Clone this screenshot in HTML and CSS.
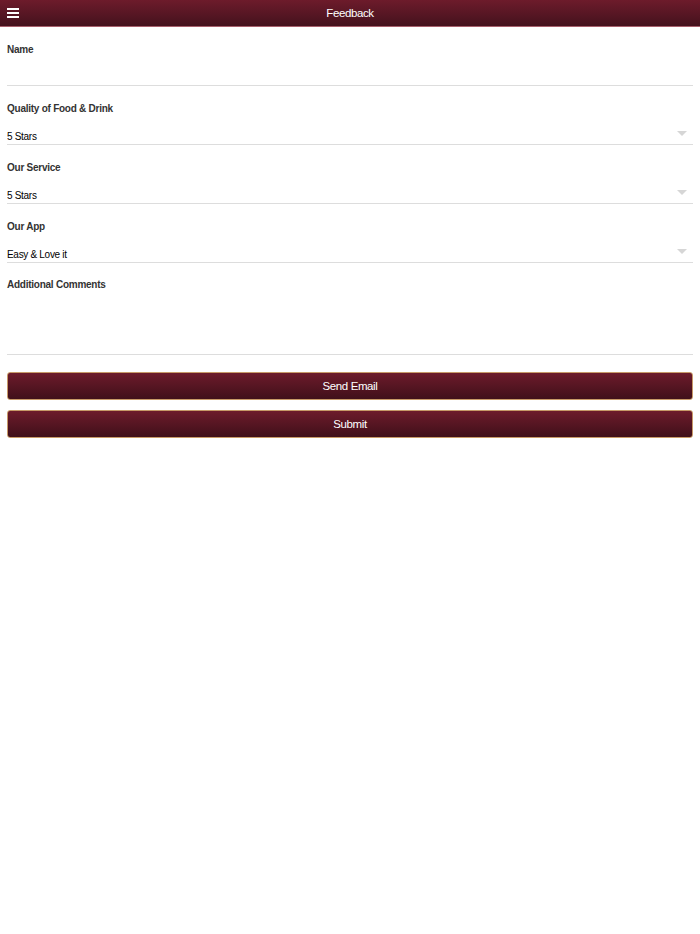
FILE: index.html
```html
<!DOCTYPE html>
<html lang="en">
<head>
<meta charset="UTF-8">
<title>Feedback</title>
<link rel="stylesheet" href="styles.css">
</head>
<body>

<div class="header">
    <div class="menu-icon">
        <span></span>
        <span></span>
        <span></span>
    </div>
    <div class="title">Feedback</div>
</div>

<form class="feedback-form">
    <div class="field">
        <label for="name">Name</label>
        <input type="text" id="name">
    </div>
    <div class="field">
        <label for="food">Quality of Food &amp; Drink</label>
        <div class="select-wrap">
            <select id="food">
                <option>5 Stars</option>
                <option>4 Stars</option>
                <option>3 Stars</option>
            </select>
        </div>
    </div>
    <div class="field">
        <label for="service">Our Service</label>
        <div class="select-wrap">
            <select id="service">
                <option>5 Stars</option>
                <option>4 Stars</option>
                <option>3 Stars</option>
            </select>
        </div>
    </div>
    <div class="field">
        <label for="app">Our App</label>
        <div class="select-wrap">
            <select id="app">
                <option>Easy &amp; Love it</option>
                <option>Okay</option>
            </select>
        </div>
    </div>
    <div class="field comments">
        <label for="comments">Additional Comments</label>
        <textarea id="comments"></textarea>
    </div>

    <button type="button" class="btn first">Send Email</button>
    <button type="button" class="btn">Submit</button>
</form>

</body>
</html>
```

FILE: styles.css
```css
body {
    margin: 0;
    font-family: "Liberation Sans", Arial, sans-serif;
    background: #fff;
    color: #333;
}

.header {
    position: relative;
    height: 26px;
    border-bottom: 1px solid #a8606c;
    background: linear-gradient(#6d1b2b, #44121d);
    display: flex;
    align-items: center;
    justify-content: center;
}

.menu-icon {
    position: absolute;
    left: 7px;
    top: 8px;
    width: 12px;
    display: flex;
    flex-direction: column;
    gap: 2px;
}

.menu-icon span {
    display: block;
    height: 2px;
    background: #fff;
}

.title {
    color: #fff;
    font-size: 11.5px;
    letter-spacing: -0.4px;
}

.feedback-form {
    padding: 0 7px;
}

.field label {
    display: block;
    margin-top: 15px;
    line-height: 16px;
    font-size: 10px;
    letter-spacing: -0.25px;
    font-weight: bold;
    color: #333;
}

.field.comments label {
    margin-top: 14px;
}

.field input,
.field select,
.field textarea {
    display: block;
    width: 100%;
    box-sizing: border-box;
    margin: 0;
    border: none;
    border-bottom: 1px solid #ddd;
    background: transparent;
    font-family: "Liberation Sans", Arial, sans-serif;
    font-size: 10px;
    letter-spacing: -0.3px;
    color: #000;
    outline: none;
    border-radius: 0;
}

.field input,
.field select {
    height: 28px;
    padding: 13px 0 0 0;
    line-height: 14px;
}

.field select {
    appearance: none;
    -webkit-appearance: none;
}

.select-wrap {
    position: relative;
}

.select-wrap::after {
    content: "";
    position: absolute;
    right: 6px;
    top: 14px;
    border-left: 5px solid transparent;
    border-right: 5px solid transparent;
    border-top: 5px solid #d6d6d6;
    pointer-events: none;
}

.field textarea {
    height: 62px;
    resize: none;
}

.btn {
    display: block;
    width: 100%;
    height: 28px;
    margin-top: 10px;
    border: 1px solid #c79a68;
    border-radius: 3px;
    background: linear-gradient(#6d1b2b, #40101a);
    color: #fff;
    font-family: "Liberation Sans", Arial, sans-serif;
    font-size: 11.5px;
    letter-spacing: -0.4px;
    cursor: pointer;
}

.btn.first {
    margin-top: 17px;
}
```
